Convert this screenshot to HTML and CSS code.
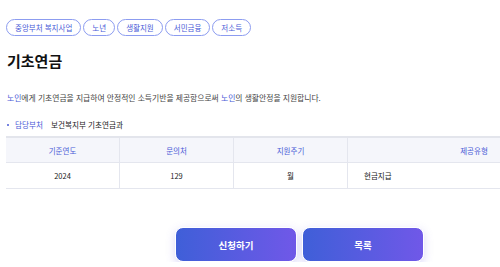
FILE: index.html
```html
<!DOCTYPE html>
<html lang="ko">
<head>
    <meta charset="UTF-8">
    <meta name="viewport" content="width=device-width, initial-scale=1.0">
    <title>기초연금 | 복지서비스</title>
    <link rel="stylesheet" href="styles.css">
</head>
<body>
    <div class="page">
        <div class="tags">
            <span class="tag">중앙부처 복지사업</span>
            <span class="tag">노년</span>
            <span class="tag">생활지원</span>
            <span class="tag">서민금융</span>
            <span class="tag">저소득</span>
        </div>

        <h1 class="title">기초연금</h1>

        <p class="summary"><span class="hl">노인</span>에게 기초연금을 지급하여 안정적인 소득기반을 제공함으로써 <span class="hl">노인</span>의 생활안정을 지원합니다.</p>

        <p class="dept">
            <span class="dot"></span>
            <span class="dept-label">담당부처</span>
            <span class="dept-name">보건복지부 기초연금과</span>
        </p>

        <div class="table-wrap">
            <table class="info-table">
                <thead>
                    <tr>
                        <th class="col-year">기준연도</th>
                        <th class="col-call">문의처</th>
                        <th class="col-cycle">지원주기</th>
                        <th>제공유형</th>
                    </tr>
                </thead>
                <tbody>
                    <tr>
                        <td>2024</td>
                        <td>129</td>
                        <td>월</td>
                        <td class="left">현금지급</td>
                    </tr>
                </tbody>
            </table>
        </div>

        <div class="actions">
            <a href="#" class="button">신청하기</a>
            <a href="#" class="button">목록</a>
        </div>
    </div>
</body>
</html>
```

FILE: styles.css
```css
:root {
    --primary: #4a5bd7;
    --tag-border: #8c9cf0;
    --text: #333;
    --line: #e4e6ee;
    --head-bg: #f5f6fb;
}

body {
    font-family: "Noto Sans CJK KR", "Noto Sans", sans-serif;
    margin: 0;
    padding: 0;
    background-color: #fff;
    color: var(--text);
}

.page {
    padding: 19px 0 0 6px;
}

.tags {
    display: flex;
    gap: 2px;
}

.tag {
    display: inline-flex;
    align-items: center;
    height: 17px;
    padding: 0 8px;
    box-sizing: border-box;
    border: 1px solid var(--tag-border);
    border-radius: 9px;
    font-size: 7.5px;
    color: var(--primary);
    white-space: nowrap;
}

.title {
    margin: 14px 0 0 1px;
    font-size: 15px;
    line-height: 22px;
    font-weight: 700;
    color: #111;
}

.summary {
    margin: 20px 0 0 1px;
    font-size: 7.8px;
    line-height: 12px;
    color: #444;
    white-space: nowrap;
}

.hl {
    color: var(--primary);
}

.dept {
    display: flex;
    align-items: center;
    margin: 15px 0 0 1px;
    font-size: 7.6px;
    line-height: 12px;
}

.dot {
    width: 2px;
    height: 2px;
    border-radius: 50%;
    background-color: var(--primary);
    margin-right: 6px;
}

.dept-label {
    color: var(--primary);
    margin-right: 8px;
}

.dept-name {
    color: #222;
}

.table-wrap {
    margin-top: 5px;
    overflow: hidden;
}

.info-table {
    width: 594px;
    border-collapse: collapse;
    border-top: 2px solid #e3e5ec;
    font-size: 7.5px;
}

.info-table th,
.info-table td {
    height: 24px;
    padding: 0;
    text-align: center;
    border-bottom: 1px solid var(--line);
    border-left: 1px solid var(--line);
}

.info-table th:first-child,
.info-table td:first-child {
    border-left: none;
}

.info-table th {
    background-color: var(--head-bg);
    color: var(--primary);
    font-weight: 400;
}

.info-table td {
    height: 25px;
    color: #222;
}

.info-table td.left {
    text-align: left;
    padding-left: 16px;
}

.col-year,
.col-call,
.col-cycle {
    width: 113px;
}

.actions {
    display: flex;
    gap: 5px;
    margin-top: 38px;
    padding-left: 169px;
}

.button {
    display: flex;
    align-items: center;
    justify-content: center;
    width: 122px;
    height: 35px;
    box-sizing: border-box;
    border: 1px solid #fff;
    border-radius: 8px;
    background: linear-gradient(90deg, #3f5fd8, #7058e8);
    box-shadow: 0 3px 10px rgba(110, 100, 230, 0.25);
    color: #fff;
    font-size: 9.5px;
    font-weight: 700;
    text-decoration: none;
}
```
